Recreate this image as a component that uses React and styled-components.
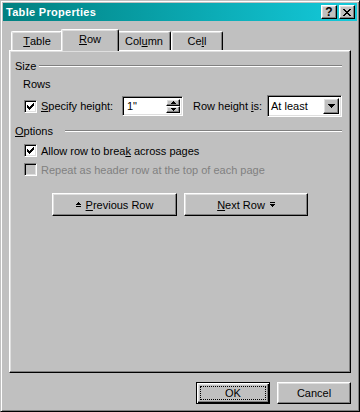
import React from 'react';
import styled, { createGlobalStyle, css } from 'styled-components';

const GlobalStyle = createGlobalStyle`
  html, body { margin: 0; padding: 0; background: #c0c0c0; }
  body { font-family: "Liberation Sans", Arial, sans-serif; font-size: 11px; color: #000; }
  * { box-sizing: border-box; }
`;

const raised = css`
  border: 1px solid;
  border-color: #fff #000 #000 #fff;
  box-shadow: inset -1px -1px #808080, inset 1px 1px #dfdfdf;
`;

const sunken = css`
  border: 1px solid;
  border-color: #808080 #fff #fff #808080;
  box-shadow: inset 1px 1px #000, inset -1px -1px #dfdfdf;
`;

const Window = styled.div`
  width: 360px;
  height: 412px;
  background: #c0c0c0;
  border: 1px solid;
  border-color: #c0c0c0 #000 #000 #c0c0c0;
  box-shadow: inset 1px 1px #fff, inset -1px -1px #808080;
  padding: 2px;
  display: flex;
  flex-direction: column;
`;

const TitleBar = styled.div`
  height: 18px;
  flex: none;
  display: flex;
  align-items: center;
  padding: 0 2px 0 3px;
  background: linear-gradient(to right, #008080, #14cadb);
`;

const Title = styled.div`
  flex: 1;
  color: #fff;
  font-weight: bold;
  font-size: 11px;
  letter-spacing: 0.3px;
`;

const CapButton = styled.div`
  ${raised};
  width: 16px;
  height: 14px;
  margin-left: 2px;
  background: #c0c0c0;
  display: flex;
  align-items: center;
  justify-content: center;
  font-weight: bold;
  font-size: 12px;
  line-height: 12px;
`;

const Body = styled.div`
  flex: 1;
  display: flex;
  flex-direction: column;
  padding: 8px 6px 0 6px;
`;

const TabStrip = styled.div`
  height: 21px;
  flex: none;
  display: flex;
  align-items: flex-end;
  padding-left: 2px;
`;

const Tab = styled.div`
  width: ${(p) => p.$w + (p.$active ? 4 : 0)}px;
  height: ${(p) => (p.$active ? 22 : 19)}px;
  margin: ${(p) => (p.$active ? '0 -2px -1px' : '0')};
  position: relative;
  z-index: ${(p) => (p.$active ? 2 : 1)};
  background: #c0c0c0;
  border-top: 1px solid #fff;
  border-left: 1px solid #fff;
  border-right: 1px solid #000;
  border-radius: 2px 2px 0 0;
  box-shadow: inset -1px 0 #808080, inset 1px 1px #dfdfdf;
  display: flex;
  align-items: center;
  justify-content: center;
  padding-bottom: ${(p) => (p.$active ? 3 : 0)}px;
`;

const Panel = styled.div`
  height: 323px;
  flex: none;
  border: 1px solid;
  border-color: #fff #000 #000 #fff;
  box-shadow: inset -1px -1px #808080, inset 1px 1px #dfdfdf;
  padding: 8px 8px 0 5px;
  display: flex;
  flex-direction: column;
`;

const GroupHeader = styled.div`
  height: 14px;
  display: flex;
  align-items: center;
  margin-top: ${(p) => p.$mt || 0}px;
`;

const GroupLabel = styled.span`
  width: ${(p) => p.$w}px;
  flex: none;
`;

const Rule = styled.div`
  flex: 1;
  height: 2px;
  border-top: 1px solid #808080;
  border-bottom: 1px solid #fff;
`;

const SubLabel = styled.div`
  height: 14px;
  line-height: 14px;
  margin-top: 4px;
  padding-left: 8px;
`;

const Row = styled.div`
  height: ${(p) => p.$h}px;
  margin-top: ${(p) => p.$mt}px;
  display: flex;
  align-items: center;
  padding-left: 9px;
  color: ${(p) => (p.$disabled ? '#808080' : '#000')};
`;

const Box = styled.div`
  ${sunken};
  width: 13px;
  height: 13px;
  flex: none;
  background: ${(p) => (p.$disabled ? '#c0c0c0' : '#fff')};
  display: flex;
  align-items: center;
  justify-content: center;
`;

const CheckText = styled.span`
  margin-left: 4px;
  width: ${(p) => (p.$w ? `${p.$w}px` : 'auto')};
  flex: none;
`;

const Field = styled.div`
  ${sunken};
  width: 61px;
  height: 20px;
  background: #fff;
  display: flex;
  align-items: stretch;
  padding: 2px;
`;

const FieldText = styled.span`
  flex: 1;
  padding-left: 2px;
  display: flex;
  align-items: center;
`;

const Spinner = styled.div`
  width: 14px;
  display: flex;
  flex-direction: column;
`;

const SpinBtn = styled.div`
  ${raised};
  flex: 1;
  background: #c0c0c0;
  display: flex;
  align-items: center;
  justify-content: center;
`;

const InlineLabel = styled.span`
  margin-left: 10px;
`;

const Select = styled.div`
  ${sunken};
  margin-left: auto;
  width: 75px;
  height: 22px;
  background: #fff;
  display: flex;
  align-items: stretch;
  padding: 2px;
`;

const SelectText = styled.span`
  flex: 1;
  padding-left: 1px;
  display: flex;
  align-items: center;
`;

const DropBtn = styled.div`
  ${raised};
  width: 16px;
  background: #c0c0c0;
  display: flex;
  align-items: center;
  justify-content: center;
`;

const NavRow = styled.div`
  margin-top: 16px;
  display: flex;
  gap: 7px;
  padding-left: 37px;
`;

const Button = styled.div`
  ${raised};
  width: ${(p) => p.$w}px;
  height: ${(p) => p.$h}px;
  background: #c0c0c0;
  display: flex;
  align-items: center;
  justify-content: center;
  gap: 5px;
`;

const DefaultButton = styled.div`
  width: ${(p) => p.$w}px;
  height: ${(p) => p.$h}px;
  background: #c0c0c0;
  border: 1px solid #000;
  box-shadow: inset 1px 1px #fff, inset -1px -1px #000, inset -2px -2px #808080, inset 2px 2px #dfdfdf;
  padding: 3px;
  display: flex;
`;

const FocusRect = styled.span`
  flex: 1;
  border: 1px dotted #000;
  display: flex;
  align-items: center;
  justify-content: center;
`;

const Footer = styled.div`
  margin-top: 9px;
  display: flex;
  justify-content: flex-end;
  gap: 7px;
`;

const Pixels = ({ w, h, cells, color = '#000' }) => (
  <svg width={w} height={h} viewBox={`0 0 ${w} ${h}`} shapeRendering="crispEdges">
    {cells.map(([x, y, cw = 1, ch = 1], i) => (
      <rect key={i} x={x} y={y} width={cw} height={ch} fill={color} />
    ))}
  </svg>
);

const CheckMark = () => (
  <Pixels
    w={7}
    h={7}
    cells={[
      [0, 2, 1, 3],
      [1, 3, 1, 3],
      [2, 4, 1, 3],
      [3, 3, 1, 3],
      [4, 2, 1, 3],
      [5, 1, 1, 3],
      [6, 0, 1, 3],
    ]}
  />
);

const CloseGlyph = () => (
  <Pixels
    w={8}
    h={7}
    cells={[
      [0, 0, 2, 1], [6, 0, 2, 1],
      [1, 1, 2, 1], [5, 1, 2, 1],
      [2, 2, 4, 1],
      [3, 3, 2, 1],
      [2, 4, 4, 1],
      [1, 5, 2, 1], [5, 5, 2, 1],
      [0, 6, 2, 1], [6, 6, 2, 1],
    ]}
  />
);

const TriUp = () => (
  <Pixels w={5} h={3} cells={[[2, 0, 1, 1], [1, 1, 3, 1], [0, 2, 5, 1]]} />
);
const TriDown = () => (
  <Pixels w={5} h={3} cells={[[0, 0, 5, 1], [1, 1, 3, 1], [2, 2, 1, 1]]} />
);
const DropArrow = () => (
  <Pixels w={7} h={4} cells={[[0, 0, 7, 1], [1, 1, 5, 1], [2, 2, 3, 1], [3, 3, 1, 1]]} />
);
const PrevIcon = () => (
  <Pixels w={5} h={6} cells={[[2, 0, 1, 1], [1, 1, 3, 1], [0, 2, 5, 1], [0, 4, 5, 1]]} />
);
const NextIcon = () => (
  <Pixels w={5} h={6} cells={[[0, 0, 5, 1], [0, 2, 5, 1], [1, 3, 3, 1], [2, 4, 1, 1]]} />
);

const Check = ({ checked, disabled }) => (
  <Box $disabled={disabled}>{checked && <CheckMark />}</Box>
);

const tabs = [
  { key: 'table', w: 52, label: <><u>T</u>able</> },
  { key: 'row', w: 54, label: <><u>R</u>ow</>, active: true },
  { key: 'column', w: 54, label: <>Col<u>u</u>mn</> },
  { key: 'cell', w: 52, label: <>Ce<u>l</u>l</> },
];

export default function App() {
  return (
    <>
      <GlobalStyle />
      <Window>
        <TitleBar>
          <Title>Table Properties</Title>
          <CapButton>?</CapButton>
          <CapButton><CloseGlyph /></CapButton>
        </TitleBar>
        <Body>
          <TabStrip>
            {tabs.map((t) => (
              <Tab key={t.key} $w={t.w} $active={t.active}>{t.label}</Tab>
            ))}
          </TabStrip>
          <Panel>
            <GroupHeader>
              <GroupLabel $w={24}>Size</GroupLabel>
              <Rule />
            </GroupHeader>
            <SubLabel>Rows</SubLabel>
            <Row $h={22} $mt={4}>
              <Check checked />
              <CheckText $w={81}><u>S</u>pecify height:</CheckText>
              <Field>
                <FieldText>1"</FieldText>
                <Spinner>
                  <SpinBtn><TriUp /></SpinBtn>
                  <SpinBtn><TriDown /></SpinBtn>
                </Spinner>
              </Field>
              <InlineLabel>Row height <u>i</u>s:</InlineLabel>
              <Select>
                <SelectText>At least</SelectText>
                <DropBtn><DropArrow /></DropBtn>
              </Select>
            </Row>
            <GroupHeader $mt={7}>
              <GroupLabel $w={50}><u>O</u>ptions</GroupLabel>
              <Rule />
            </GroupHeader>
            <Row $h={15} $mt={5}>
              <Check checked />
              <CheckText>Allow row to brea<u>k</u> across pages</CheckText>
            </Row>
            <Row $h={15} $mt={4} $disabled>
              <Check disabled />
              <CheckText>Repeat as header row at the top of each page</CheckText>
            </Row>
            <NavRow>
              <Button $w={125} $h={23}>
                <PrevIcon />
                <span><u>P</u>revious Row</span>
              </Button>
              <Button $w={124} $h={23}>
                <span><u>N</u>ext Row</span>
                <NextIcon />
              </Button>
            </NavRow>
          </Panel>
          <Footer>
            <DefaultButton $w={74} $h={22}>
              <FocusRect>OK</FocusRect>
            </DefaultButton>
            <Button $w={74} $h={22}>Cancel</Button>
          </Footer>
        </Body>
      </Window>
    </>
  );
}
